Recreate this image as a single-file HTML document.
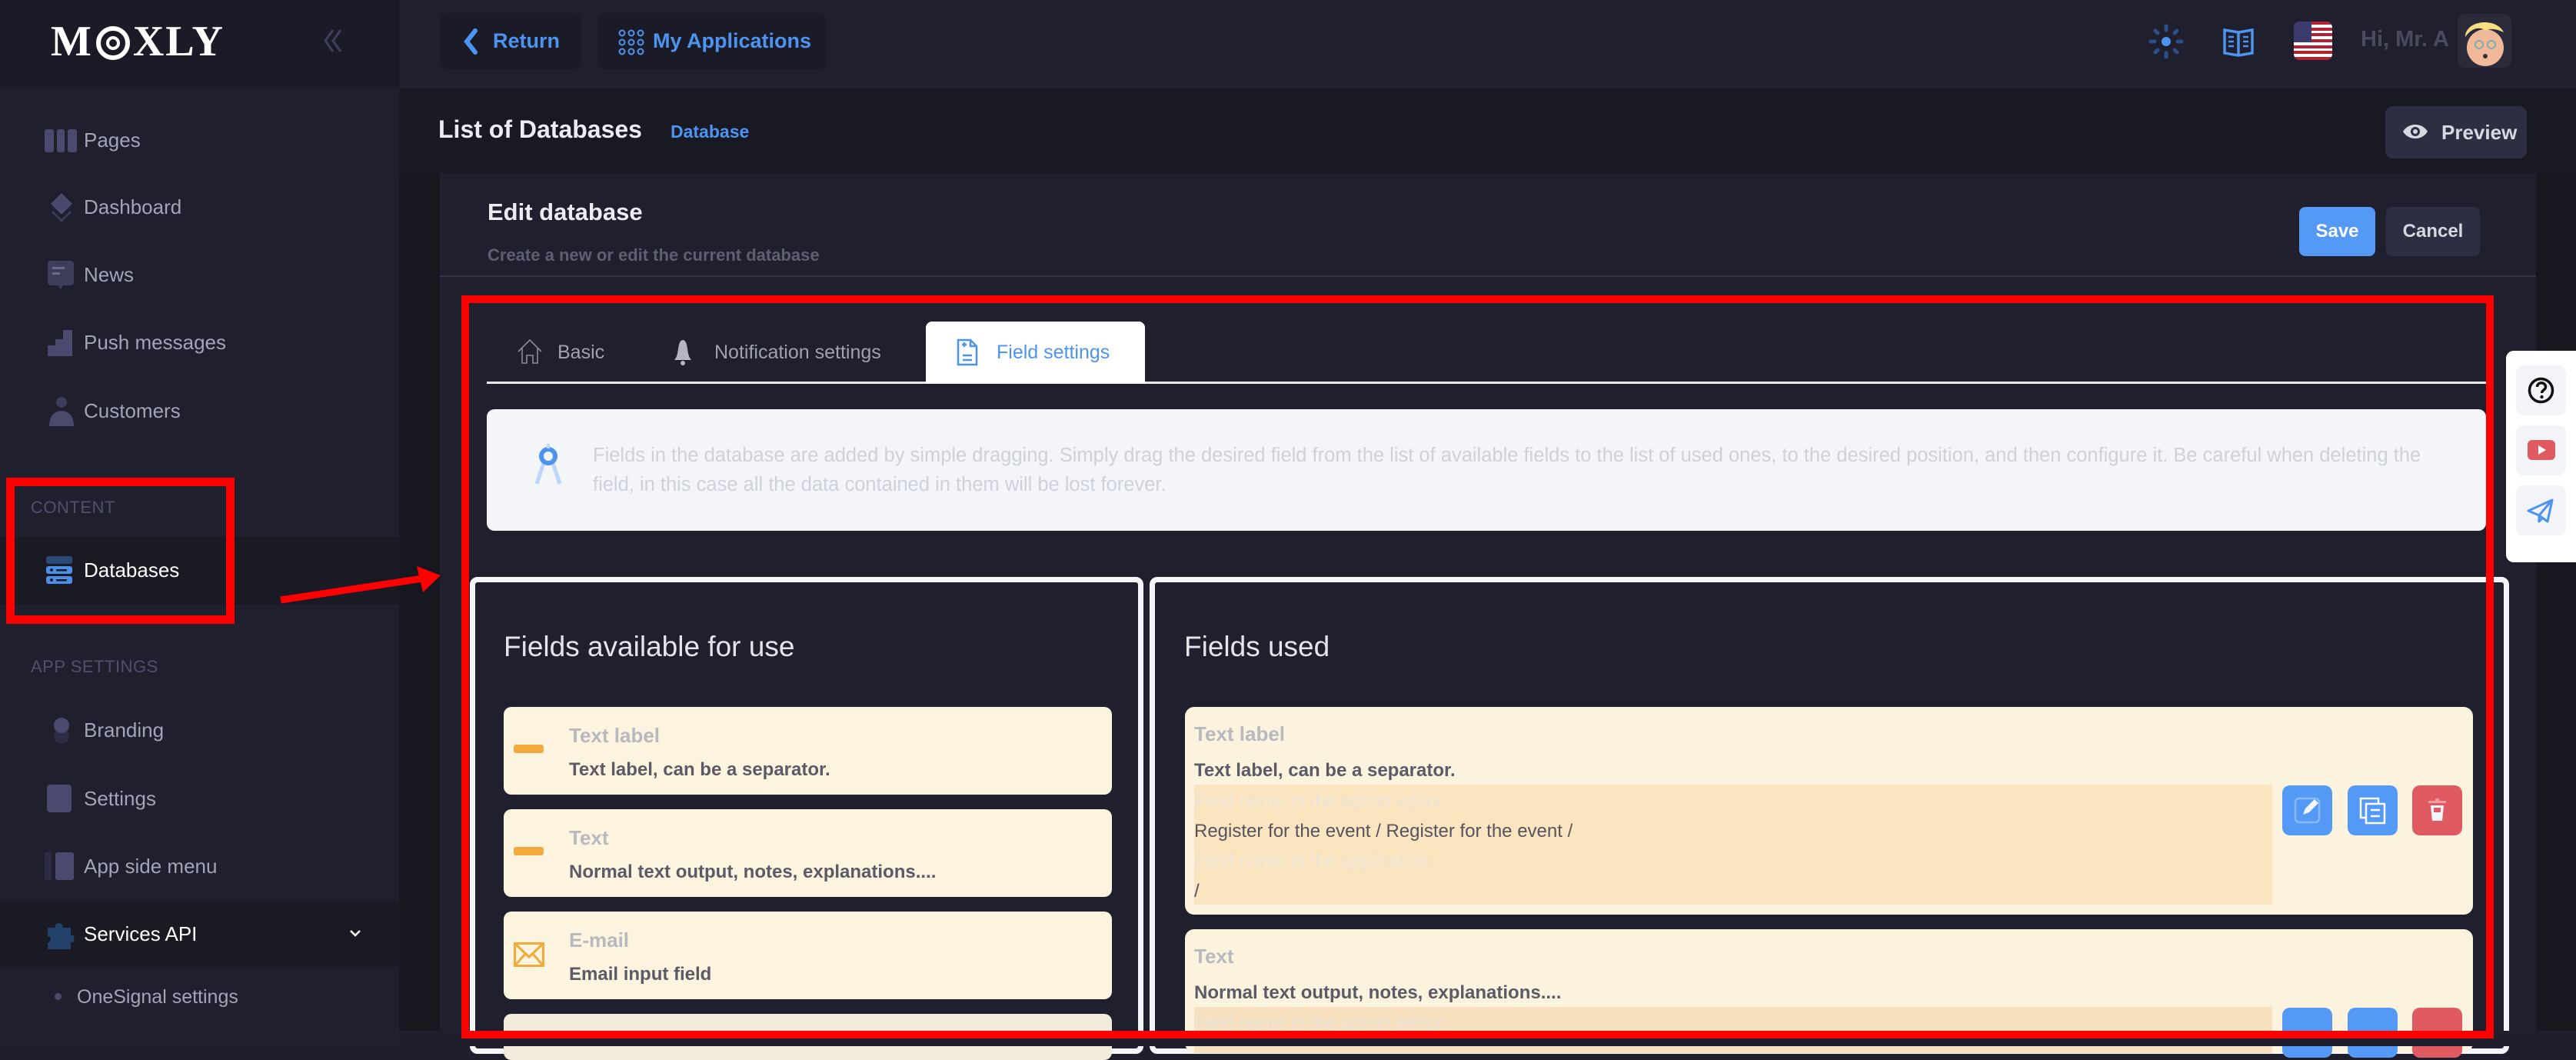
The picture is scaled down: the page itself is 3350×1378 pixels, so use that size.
<!DOCTYPE html>
<html><head><meta charset="utf-8"><style>
*{margin:0;padding:0;box-sizing:border-box}
body{width:3350px;height:1360px;overflow:hidden;background:#1e1e2c;font-family:"Liberation Sans",sans-serif;position:relative}
.a{position:absolute}
.nav{position:absolute;left:0;width:519px;height:60px;display:flex;align-items:center;font-size:26px;color:#a3a3ba}
.nav .ic{position:absolute;left:58px;width:44px;height:44px}
.nav span{position:absolute;left:109px}
.sec{position:absolute;left:40px;font-size:22px;color:#50506c;letter-spacing:.5px}
.card{position:absolute;left:655px;width:791px;height:114px;background:#fdf4df;border-radius:10px}
.card .t{position:absolute;left:85px;top:22px;font-size:26px;font-weight:bold;color:#b9b8bf}
.card .d{position:absolute;left:85px;top:68px;font-size:24px;font-weight:bold;color:#5b5a66}
.card .dash{position:absolute;left:13px;top:49px;width:39px;height:11px;border-radius:3px;background:#f2ab3c}
.rc{position:absolute;left:1541px;width:1675px;background:#fcf3df;border-radius:12px}
.rc .t{position:absolute;left:12px;font-size:26px;font-weight:bold;color:#b9b8bf}
.rc .d{position:absolute;left:12px;font-size:24px;font-weight:bold;color:#5b5a66}
.ib{position:absolute;left:12px;width:1402px;background:#fbe4c0;font-size:24px;line-height:39px;padding-top:2px}
.ib .l{color:#ece4d8}.ib .v{color:#55545e}
.btn{position:absolute;width:65px;height:65px;border-radius:10px}
</style></head><body>
<!-- sidebar -->
<div class="a" style="left:0;top:0;width:519px;height:115px;background:#1b1b28"></div>
<div class="a" style="left:0;top:115px;width:519px;height:1245px;background:#1f1f2d"></div>
<div class="a" style="left:66px;top:22px;font-family:'Liberation Serif',serif;font-weight:bold;font-size:56px;color:#fff;letter-spacing:2px;display:flex;align-items:center">M<svg width="50" height="58" viewBox="0 0 50 58" style="margin:0 1px"><circle cx="25" cy="31" r="19" fill="none" stroke="#fff" stroke-width="6"/><circle cx="25" cy="31" r="7" fill="none" stroke="#fff" stroke-width="4"/></svg>XLY</div>
<svg class="a" style="left:415px;top:35px" width="36" height="36" viewBox="0 0 36 36"><path d="M18 4L8 18l10 14M28 4L18 18l10 14" fill="none" stroke="#3e3e5e" stroke-width="3"/></svg>

<div class="nav" style="top:152px"><svg class="ic" viewBox="0 0 44 44"><rect x="0" y="8" width="12" height="30" rx="3" fill="#4a4a6e"/><rect x="16" y="8" width="10" height="30" rx="3" fill="#4a4a6e"/><rect x="30" y="8" width="12" height="30" rx="3" fill="#4a4a6e"/></svg><span>Pages</span></div>
<div class="nav" style="top:239px"><svg class="ic" viewBox="0 0 44 44"><path d="M22 4L36 18L22 32L8 18Z" fill="#4a4a6e"/><path d="M10 28L22 40L34 28" fill="none" stroke="#3a3a58" stroke-width="3"/></svg><span>Dashboard</span></div>
<div class="nav" style="top:327px"><svg class="ic" viewBox="0 0 44 44"><rect x="4" y="4" width="34" height="32" rx="4" fill="#3d3d5c"/><rect x="10" y="12" width="16" height="3" fill="#6a6a8a"/><rect x="10" y="19" width="10" height="3" fill="#6a6a8a"/><path d="M18 36h6l-3 5z" fill="#3d3d5c"/></svg><span>News</span></div>
<div class="nav" style="top:415px"><svg class="ic" viewBox="0 0 44 44"><path d="M4 40V26h10V18h10V6h12v34z" fill="#4a4a6e"/></svg><span>Push messages</span></div>
<div class="nav" style="top:504px"><svg class="ic" viewBox="0 0 44 44"><circle cx="22" cy="11" r="7" fill="#3d3d5c"/><path d="M6 42c0-14 8-20 16-20s16 6 16 20z" fill="#4a4a6e"/></svg><span>Customers</span></div>
<div class="sec" style="top:647px">CONTENT</div>
<div class="a" style="left:0;top:698px;width:519px;height:88px;background:#1a1a25"></div>
<div class="nav" style="top:711px;color:#fff"><svg class="ic" viewBox="0 0 44 44"><rect x="2" y="4" width="34" height="10" rx="3" fill="#2a4a78"/><rect x="2" y="17" width="34" height="10" rx="3" fill="#4c8fe8"/><rect x="2" y="30" width="34" height="10" rx="3" fill="#4c8fe8"/><circle cx="9" cy="22" r="2" fill="#1a1a25"/><circle cx="9" cy="35" r="2" fill="#1a1a25"/><rect x="15" y="21" width="14" height="2.5" fill="#1a1a25"/><rect x="15" y="34" width="14" height="2.5" fill="#1a1a25"/></svg><span>Databases</span></div>
<div class="sec" style="top:854px">APP SETTINGS</div>
<div class="nav" style="top:919px"><svg class="ic" viewBox="0 0 44 44"><circle cx="22" cy="30" r="10" fill="#2c2c44"/><circle cx="22" cy="16" r="10" fill="#4a4a6e"/></svg><span>Branding</span></div>
<div class="nav" style="top:1008px"><svg class="ic" viewBox="0 0 44 44"><rect x="3" y="4" width="32" height="36" rx="4" fill="#4a4a6e"/></svg><span>Settings</span></div>
<div class="nav" style="top:1096px"><svg class="ic" viewBox="0 0 44 44"><rect x="0" y="4" width="9" height="36" fill="#2c2c44"/><rect x="14" y="4" width="24" height="36" rx="3" fill="#4a4a6e"/></svg><span>App side menu</span></div>
<div class="a" style="left:0;top:1171px;width:519px;height:86px;background:#1a1a25"></div>
<div class="nav" style="top:1184px;color:#fff"><svg class="ic" viewBox="0 0 44 44"><path d="M4 14h10c-3-8 12-8 9 0h11v10c6-3 6 12 0 9v9H4v-9c5 2 5-10 0-7z" fill="#22406a"/></svg><span>Services API</span><svg class="a" style="left:452px;top:22px" width="20" height="16" viewBox="0 0 20 16"><path d="M4 4l6 6 6-6" fill="none" stroke="#fff" stroke-width="2.5"/></svg></div>
<div class="a" style="left:71px;top:1291px;width:9px;height:9px;border-radius:50%;background:#4a4a6e"></div>
<div class="a" style="left:100px;top:1282px;font-size:25px;color:#a3a3ba">OneSignal settings</div>

<!-- topbar -->
<div class="a" style="left:519px;top:0;width:2831px;height:115px;background:#1f1f2d"></div>
<div class="a" style="left:572px;top:17px;width:184px;height:73px;background:#1b1b27;border-radius:10px"></div>
<svg class="a" style="left:602px;top:37px" width="20" height="34" viewBox="0 0 20 34"><path d="M16 3L5 17l11 14" fill="none" stroke="#4d94f0" stroke-width="6" stroke-linecap="round"/></svg>
<div class="a" style="left:641px;top:38px;font-size:27px;font-weight:bold;color:#4d94f0">Return</div>
<div class="a" style="left:778px;top:17px;width:297px;height:73px;background:#1b1b27;border-radius:10px"></div>
<svg class="a" style="left:804px;top:38px" width="34" height="34" viewBox="0 0 34 34" fill="none" stroke="#4d94f0" stroke-width="2"><circle cx="5" cy="5" r="3.5"/><circle cx="17" cy="5" r="3.5"/><circle cx="29" cy="5" r="3.5"/><circle cx="5" cy="17" r="3.5"/><circle cx="17" cy="17" r="3.5"/><circle cx="29" cy="17" r="3.5"/><circle cx="5" cy="29" r="3.5"/><circle cx="17" cy="29" r="3.5"/><circle cx="29" cy="29" r="3.5"/></svg>
<div class="a" style="left:849px;top:38px;font-size:27px;font-weight:bold;color:#4d94f0">My Applications</div>
<svg class="a" style="left:2794px;top:31px" width="46" height="46" viewBox="0 0 46 46"><circle cx="23" cy="23" r="6" fill="#4d94f0"/><g stroke="#2c4f86" stroke-width="5" stroke-linecap="round"><path d="M23 3v5M23 38v5M3 23h5M38 23h5M9 9l3 3M34 34l3 3M9 37l3-3M34 12l3-3"/></g></svg>
<svg class="a" style="left:2890px;top:33px" width="42" height="42" viewBox="0 0 42 42" fill="none" stroke="#4d94f0" stroke-width="3.5"><path d="M3 6l18 3 18-3v30l-18 3-18-3z M21 9v30"/><path d="M8 15h7M8 21h7M8 27h7M27 15h7M27 21h7M27 27h7" stroke-width="2.5"/></svg>
<svg class="a" style="left:2983px;top:28px" width="50" height="50" viewBox="0 0 50 50"><defs><clipPath id="fc"><rect width="50" height="50" rx="8"/></clipPath></defs><g clip-path="url(#fc)"><rect width="50" height="50" fill="#fff"/><g fill="#b22234"><rect y="0" width="50" height="4"/><rect y="8" width="50" height="4"/><rect y="15" width="50" height="4"/><rect y="23" width="50" height="4"/><rect y="31" width="50" height="4"/><rect y="38" width="50" height="4"/><rect y="46" width="50" height="4"/></g><rect width="23" height="27" fill="#3c3b6e"/></g></svg>
<div class="a" style="left:3070px;top:35px;font-size:29px;font-weight:bold;color:#4a4a5e">Hi, Mr. A</div>
<div class="a" style="left:3196px;top:18px;width:70px;height:70px;background:#2a2a3a;border-radius:10px;overflow:hidden"><svg width="70" height="70" viewBox="0 0 70 70"><circle cx="36" cy="44" r="24" fill="#f0b99a"/><path d="M10 30c0-22 40-26 50-6-8-4-18-6-24-2-6-6-18-4-26 8z" fill="#f6df7e"/><circle cx="28" cy="40" r="5" fill="none" stroke="#8aa" stroke-width="2"/><circle cx="44" cy="40" r="5" fill="none" stroke="#8aa" stroke-width="2"/><circle cx="36" cy="55" r="3" fill="#333"/></svg></div>

<!-- header band -->
<div class="a" style="left:519px;top:115px;width:2831px;height:110px;background:#191924"></div>
<div class="a" style="left:570px;top:150px;font-size:32px;font-weight:bold;color:#ececf2">List of Databases</div>
<div class="a" style="left:872px;top:158px;font-size:23px;font-weight:bold;color:#4d94f0">Database</div>
<div class="a" style="left:3102px;top:138px;width:184px;height:68px;background:#2e2e42;border-radius:10px"></div>
<svg class="a" style="left:3124px;top:158px" width="34" height="26" viewBox="0 0 34 26"><path d="M1 13C8 1 26 1 33 13C26 25 8 25 1 13Z" fill="#d8d8e0"/><circle cx="17" cy="13" r="6" fill="#2e2e42"/><circle cx="17" cy="13" r="3" fill="#d8d8e0"/></svg>
<div class="a" style="left:3175px;top:157px;font-size:26px;font-weight:bold;color:#d8d8e0">Preview</div>

<!-- content area -->
<div class="a" style="left:519px;top:225px;width:53px;height:1135px;background:#17171f"></div>
<div class="a" style="left:3298px;top:225px;width:52px;height:1135px;background:#17171f"></div>
<div class="a" style="left:572px;top:225px;width:2726px;height:1115px;background:#1f1f2d"></div>
<div class="a" style="left:634px;top:258px;font-size:31px;font-weight:bold;color:#ececf2">Edit database</div>
<div class="a" style="left:634px;top:319px;font-size:22px;font-weight:bold;color:#5f5f74">Create a new or edit the current database</div>
<div class="a" style="left:2990px;top:269px;width:99px;height:64px;background:#5399f5;border-radius:8px;color:#fff;font-size:24px;font-weight:bold;text-align:center;line-height:64px">Save</div>
<div class="a" style="left:3103px;top:269px;width:122px;height:64px;background:#2e2e42;border-radius:8px;color:#d8d8e0;font-size:24px;font-weight:bold;text-align:center;line-height:64px">Cancel</div>
<div class="a" style="left:572px;top:358px;width:2726px;height:2px;background:#33334a"></div>

<!-- tabs -->
<svg class="a" style="left:672px;top:440px" width="34" height="34" viewBox="0 0 34 34" fill="none" stroke="#8a8a9e" stroke-width="1.6"><path d="M2 17L17 2L32 17M7 13v19h6V22h8v10h6V13"/></svg>
<div class="a" style="left:725px;top:444px;font-size:25px;color:#a0a0b4">Basic</div>
<svg class="a" style="left:876px;top:440px" width="24" height="36" viewBox="0 0 24 36"><path d="M12 2c-2 0-4 2-5 6-2 8-1 14-6 20h22c-5-6-4-12-6-20-1-4-3-6-5-6z" fill="#b4b4c4"/><circle cx="12" cy="32" r="3" fill="#b4b4c4"/></svg>
<div class="a" style="left:929px;top:444px;font-size:25px;color:#a0a0b4">Notification settings</div>
<div class="a" style="left:633px;top:496px;width:2600px;height:3px;background:#e8e8ee"></div>
<div class="a" style="left:1204px;top:418px;width:285px;height:80px;background:#fff;border-radius:8px 8px 0 0"></div>
<svg class="a" style="left:1244px;top:440px" width="28" height="36" viewBox="0 0 28 36" fill="none" stroke="#4d94f0" stroke-width="2.5"><path d="M2 2h16l8 8v24H2z M18 2v8h8"/><path d="M7 8h6M10 5v6M8 22h12M8 28h12"/></svg>
<div class="a" style="left:1296px;top:444px;font-size:25px;color:#4d94f0">Field settings</div>

<!-- info box -->
<div class="a" style="left:633px;top:532px;width:2600px;height:158px;background:#f4f5f9;border-radius:10px"></div>
<svg class="a" style="left:695px;top:577px" width="36" height="56" viewBox="0 0 36 56"><path d="M13 22L3 52M23 22L33 52" stroke="#bcd6fa" stroke-width="5"/><circle cx="18" cy="16" r="9" fill="none" stroke="#4d94f0" stroke-width="6"/><rect x="16" y="0" width="4" height="6" fill="#bcd6fa"/></svg>
<div class="a" style="left:771px;top:573px;width:2420px;font-size:25.5px;line-height:38px;color:#cfd1da">Fields in the database are added by simple dragging. Simply drag the desired field from the list of available fields to the list of used ones, to the desired position, and then configure it. Be careful when deleting the field, in this case all the data contained in them will be lost forever.</div>

<!-- columns -->
<div class="a" style="left:611px;top:750px;width:876px;height:620px;border:7px solid #f4f5f9;border-radius:10px;background:#1f1f2d"></div>
<div class="a" style="left:1495px;top:750px;width:1768px;height:620px;border:7px solid #f4f5f9;border-radius:10px;background:#1f1f2d"></div>
<div class="a" style="left:655px;top:820px;font-size:37px;color:#e4e4ea">Fields available for use</div>
<div class="a" style="left:1540px;top:820px;font-size:37px;color:#e4e4ea">Fields used</div>

<div class="card" style="top:919px"><div class="dash"></div><div class="t">Text label</div><div class="d">Text label, can be a separator.</div></div>
<div class="card" style="top:1052px"><div class="dash"></div><div class="t">Text</div><div class="d">Normal text output, notes, explanations....</div></div>
<div class="card" style="top:1185px"><svg class="a" style="left:13px;top:40px" width="40" height="32" viewBox="0 0 40 32" fill="none" stroke="#f2ab3c" stroke-width="3"><rect x="1.5" y="1.5" width="37" height="29"/><path d="M1.5 1.5L20 19L38.5 1.5M1.5 30.5L15 15M38.5 30.5L25 15"/></svg><div class="t">E-mail</div><div class="d">Email input field</div></div>
<div class="card" style="top:1318px;height:60px;background:#f3ebdc"></div>

<div class="rc" style="top:919px;height:270px"><div class="t" style="top:20px">Text label</div><div class="d" style="top:69px">Text label, can be a separator.</div>
<div class="ib" style="top:101px;height:156px"><div class="l">Field name in the admin editor:</div><div class="v">Register for the event / Register for the event /</div><div class="l">Field name in the application:</div><div class="v">/</div></div></div>
<div class="rc" style="top:1208px;height:160px"><div class="t" style="top:20px">Text</div><div class="d" style="top:69px">Normal text output, notes, explanations....</div>
<div class="ib" style="top:101px;height:60px;background:#f7e0bd"><div class="l">Field name in the admin editor:</div></div></div>

<!-- action buttons -->
<div class="btn" style="left:2968px;top:1021px;background:#5399f5"><svg width="65" height="65" viewBox="0 0 65 65"><rect x="17" y="17" width="31" height="31" rx="5" fill="none" stroke="#8bbaf8" stroke-width="2.5"/><path d="M27 38l3-8 12-12 5 5-12 12z" fill="#f3f5fa"/></svg></div>
<div class="btn" style="left:3053px;top:1021px;background:#5399f5"><svg width="65" height="65" viewBox="0 0 65 65" fill="none" stroke="#fff" stroke-width="2.5"><rect x="17" y="17" width="23" height="25"/><rect x="24" y="24" width="24" height="25" fill="#5399f5"/><path d="M30 32h12M30 40h12"/></svg></div>
<div class="btn" style="left:3137px;top:1021px;background:#e05a62"><svg width="65" height="65" viewBox="0 0 65 65"><rect x="21" y="20" width="23" height="3" fill="#ef9ba0"/><rect x="30" y="17" width="5" height="4" fill="#ef9ba0"/><path d="M24 26h17l-2 20H26z" fill="#f3f5fa"/><rect x="28" y="29" width="9" height="6" fill="#e05a62"/></svg></div>
<div class="btn" style="left:2968px;top:1310px;background:#5399f5"></div>
<div class="btn" style="left:3053px;top:1310px;background:#5399f5"></div>
<div class="btn" style="left:3137px;top:1310px;background:#e05a62"></div>

<!-- bottom strip -->
<div class="a" style="left:519px;top:1340px;width:2831px;height:20px;background:#1e1e2c"></div>

<!-- float widget -->
<div class="a" style="left:3259px;top:456px;width:91px;height:275px;background:#fff;border-radius:10px 0 0 10px"></div>
<div class="a" style="left:3272px;top:475px;width:65px;height:65px;background:#f3f4f8;border-radius:10px"></div>
<svg class="a" style="left:3286px;top:489px" width="37" height="37" viewBox="0 0 37 37"><circle cx="18.5" cy="18.5" r="15" fill="none" stroke="#111" stroke-width="3.5"/><path d="M13.5 14c0-7 11-7 11 0 0 4-5 4-5 8" fill="none" stroke="#111" stroke-width="3.5"/><circle cx="19.5" cy="27" r="2.2" fill="#111"/></svg>
<div class="a" style="left:3272px;top:553px;width:65px;height:65px;background:#f3f4f8;border-radius:10px"></div>
<svg class="a" style="left:3287px;top:572px" width="36" height="26" viewBox="0 0 36 26"><rect width="36" height="26" rx="6" fill="#e05a62"/><path d="M14 7l10 6-10 6z" fill="#fff"/></svg>
<div class="a" style="left:3272px;top:631px;width:65px;height:65px;background:#f3f4f8;border-radius:10px"></div>
<svg class="a" style="left:3286px;top:646px" width="36" height="36" viewBox="0 0 36 36" fill="none" stroke="#4d94f0" stroke-width="3" stroke-linejoin="round"><path d="M2 18L33 4L27 32L16 24L2 18Z M16 24L33 4 M16 24v8l5-5"/></svg>

<!-- red annotations -->
<div class="a" style="left:600px;top:384px;width:2643px;height:966px;border:10px solid #ff0000"></div>
<div class="a" style="left:8px;top:621px;width:297px;height:190px;border:11px solid #ff0000"></div>
<svg class="a" style="left:360px;top:730px" width="220" height="60" viewBox="0 0 220 60"><path d="M5 50L190 22" stroke="#ff0000" stroke-width="9"/><path d="M213 18L182 6L190 40Z" fill="#ff0000"/></svg>
</body></html>
